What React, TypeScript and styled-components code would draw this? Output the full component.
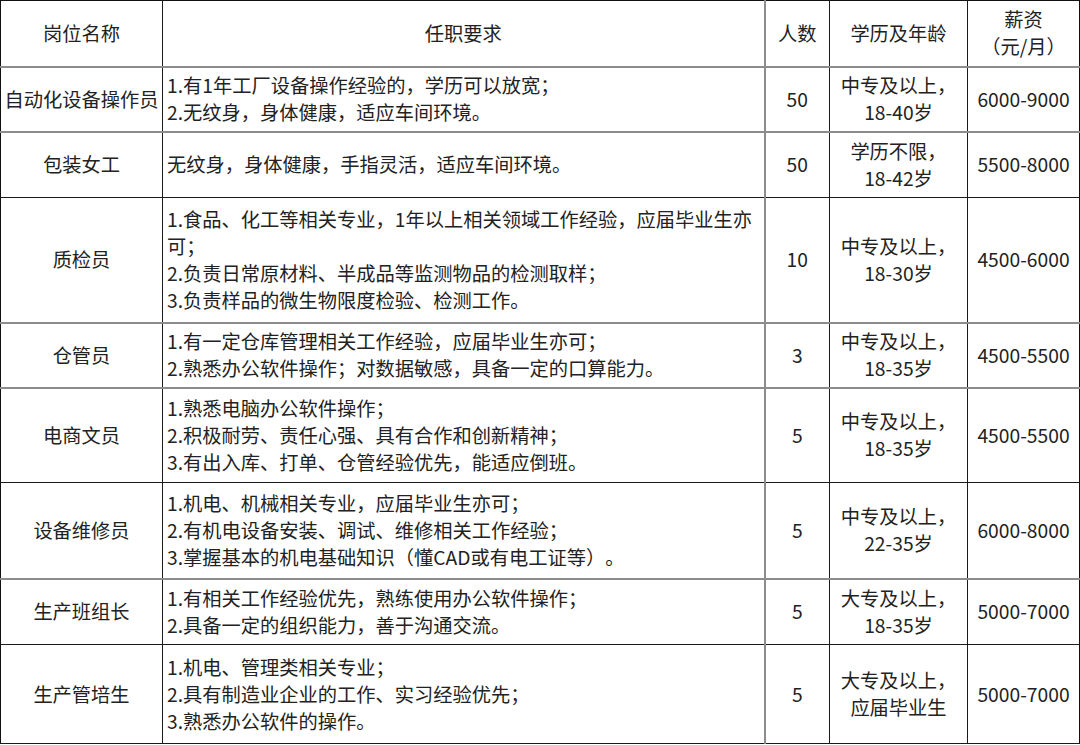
import React from 'react';
import styled, { createGlobalStyle } from 'styled-components';

const Global = createGlobalStyle`
  html, body { margin: 0; padding: 0; background: #fff; }
  body { font-family: "Noto Sans CJK SC", "Noto Sans", sans-serif; color: #222; }
`;

const Table = styled.table`
  width: 1079px;
  table-layout: fixed;
  border-collapse: collapse;
  border: 1.5px solid #111;
  font-size: 19.25px;
  line-height: 27px;
  text-spacing-trim: space-all;
`;

const Row = styled.tr<{ $h: number; $soft?: boolean }>`
  height: ${(p) => p.$h}px;
  & > td, & > th {
    border-bottom: ${(p) => (p.$soft ? '2px solid #8c8c8c' : '1px solid #1a1a1a')};
  }
`;

const Cell = styled.td<{ $align?: 'left' | 'center'; $softRight?: boolean }>`
  padding: 0 ${(p) => (p.$align === 'left' ? '4px' : '1px')};
  text-align: ${(p) => p.$align ?? 'center'};
  vertical-align: middle;
  font-weight: 400;
  color: #222;
  border-right: ${(p) => (p.$softRight ? '2px solid #8c8c8c' : '1px solid #1a1a1a')};
  &:last-child { border-right: none; }
`;

const Line = styled.div`
  white-space: nowrap;
  text-spacing-trim: space-all;
`;

type Job = {
  name: string;
  req: string[];
  num: string;
  edu: string[];
  pay: string;
  h: number;
  soft?: boolean;
};

const jobs: Job[] = [
  {
    name: '自动化设备操作员',
    req: ['1.有1年工厂设备操作经验的，学历可以放宽；', '2.无纹身，身体健康，适应车间环境。'],
    num: '50',
    edu: ['中专及以上，', '18-40岁'],
    pay: '6000-9000',
    h: 65,
    soft: true,
  },
  {
    name: '包装女工',
    req: ['无纹身，身体健康，手指灵活，适应车间环境。'],
    num: '50',
    edu: ['学历不限，', '18-42岁'],
    pay: '5500-8000',
    h: 66,
  },
  {
    name: '质检员',
    req: [
      '1.食品、化工等相关专业，1年以上相关领域工作经验，应届毕业生亦',
      '可；',
      '2.负责日常原材料、半成品等监测物品的检测取样；',
      '3.负责样品的微生物限度检验、检测工作。',
    ],
    num: '10',
    edu: ['中专及以上，', '18-30岁'],
    pay: '4500-6000',
    h: 125,
    soft: true,
  },
  {
    name: '仓管员',
    req: ['1.有一定仓库管理相关工作经验，应届毕业生亦可；', '2.熟悉办公软件操作；对数据敏感，具备一定的口算能力。'],
    num: '3',
    edu: ['中专及以上，', '18-35岁'],
    pay: '4500-5500',
    h: 65,
    soft: true,
  },
  {
    name: '电商文员',
    req: ['1.熟悉电脑办公软件操作；', '2.积极耐劳、责任心强、具有合作和创新精神；', '3.有出入库、打单、仓管经验优先，能适应倒班。'],
    num: '5',
    edu: ['中专及以上，', '18-35岁'],
    pay: '4500-5500',
    h: 95,
  },
  {
    name: '设备维修员',
    req: ['1.机电、机械相关专业，应届毕业生亦可；', '2.有机电设备安装、调试、维修相关工作经验；', '3.掌握基本的机电基础知识（懂CAD或有电工证等）。'],
    num: '5',
    edu: ['中专及以上，', '22-35岁'],
    pay: '6000-8000',
    h: 96,
    soft: true,
  },
  {
    name: '生产班组长',
    req: ['1.有相关工作经验优先，熟练使用办公软件操作；', '2.具备一定的组织能力，善于沟通交流。'],
    num: '5',
    edu: ['大专及以上，', '18-35岁'],
    pay: '5000-7000',
    h: 66,
  },
  {
    name: '生产管培生',
    req: ['1.机电、管理类相关专业；', '2.具有制造业企业的工作、实习经验优先；', '3.熟悉办公软件的操作。'],
    num: '5',
    edu: ['大专及以上，', '应届毕业生'],
    pay: '5000-7000',
    h: 99,
  },
];

export default function App() {
  return (
    <>
      <Global />
      <Table>
        <colgroup>
          <col style={{ width: 162 }} />
          <col style={{ width: 602 }} />
          <col style={{ width: 65 }} />
          <col style={{ width: 138 }} />
          <col style={{ width: 112 }} />
        </colgroup>
        <thead>
          <Row $h={66} $soft>
            <Cell as="th">岗位名称</Cell>
            <Cell as="th" $softRight>任职要求</Cell>
            <Cell as="th">人数</Cell>
            <Cell as="th">学历及年龄</Cell>
            <Cell as="th">
              <Line>薪资</Line>
              <Line>（元/月）</Line>
            </Cell>
          </Row>
        </thead>
        <tbody>
          {jobs.map((j) => (
            <Row key={j.name} $h={j.h} $soft={j.soft}>
              <Cell>{j.name}</Cell>
              <Cell $align="left" $softRight>
                {j.req.map((r, i) => (
                  <Line key={i}>{r}</Line>
                ))}
              </Cell>
              <Cell>{j.num}</Cell>
              <Cell>
                {j.edu.map((e, i) => (
                  <Line key={i}>{e}</Line>
                ))}
              </Cell>
              <Cell>{j.pay}</Cell>
            </Row>
          ))}
        </tbody>
      </Table>
    </>
  );
}
